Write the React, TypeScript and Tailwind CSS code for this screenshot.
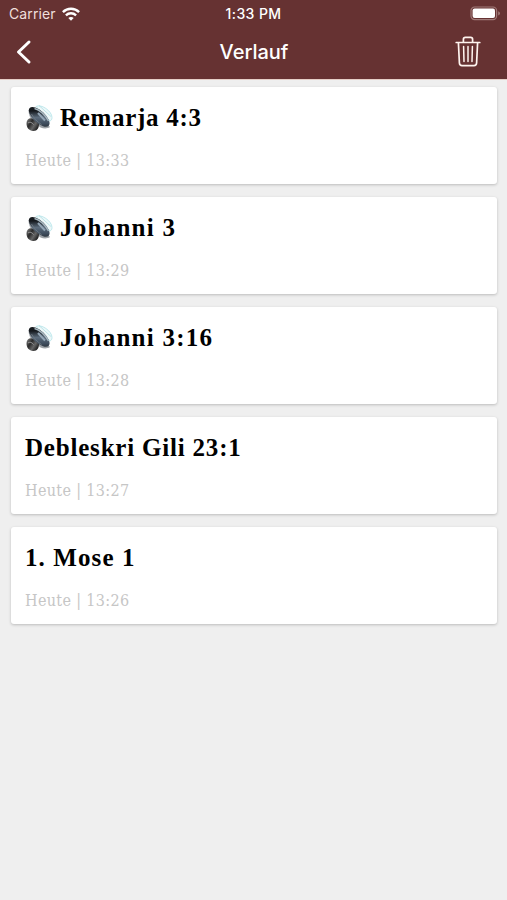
interface HistoryEntry {
  title: string;
  time: string;
  audio?: boolean;
  tracking: string;
}

const entries: HistoryEntry[] = [
  { title: "Remarja 4:3", time: "13:33", audio: true, tracking: "tracking-[0.7px]" },
  { title: "Johanni 3", time: "13:29", audio: true, tracking: "tracking-[1.25px]" },
  { title: "Johanni 3:16", time: "13:28", audio: true, tracking: "tracking-[1.25px]" },
  { title: "Debleskri Gili 23:1", time: "13:27", tracking: "tracking-[0.8px]" },
  { title: "1. Mose 1", time: "13:26", tracking: "tracking-[1.1px]" },
];

function WifiIcon() {
  return (
    <svg width="18" height="14" viewBox="0 0 18 14" fill="none" stroke="#fff" strokeWidth="2.4">
      <path d="M.9 5.1C5.4.7 12.6.7 17.1 5.1" />
      <path d="M3.9 8.3c2.9-2.7 7.3-2.7 10.2 0" />
      <path d="M9 13.8 6.3 11c1.5-1.4 3.9-1.4 5.4 0Z" fill="#fff" stroke="none" />
    </svg>
  );
}

function BatteryIcon() {
  return (
    <svg width="31" height="15" viewBox="0 0 31 15" fill="none">
      <rect x="1" y="1" width="25.6" height="12.6" rx="3.6" stroke="#a07a78" strokeWidth="1.2" />
      <rect x="2.6" y="2.6" width="22.4" height="9.4" rx="2" fill="#fff" />
      <path d="M28.2 5.2c2.4.9 2.4 3.3 0 4.2Z" fill="#a07a78" />
    </svg>
  );
}

function TrashIcon() {
  return (
    <svg
      width="26"
      height="32"
      viewBox="0 0 26 32"
      fill="none"
      stroke="#fff4ef"
      strokeWidth="1.7"
      strokeLinecap="round"
      strokeLinejoin="round"
    >
      <path d="M1.2 6.5h23.6" />
      <path d="M8.4 6.2V3.4c0-1.2.8-2 2-2h5.2c1.2 0 2 .8 2 2v2.8" />
      <path d="M3.4 6.8 4.4 27c.1 1.7 1 2.6 2.6 2.6h12c1.6 0 2.5-.9 2.6-2.6l1-20.2" />
      <path d="m8.6 10.6.4 15M13 10.6v15M17.4 10.6l-.4 15" strokeWidth="1.5" />
    </svg>
  );
}

function SpeakerIcon() {
  return (
    <svg width="28" height="28" viewBox="0 0 28 28" fill="none" className="shrink-0">
      <defs>
        <linearGradient id="cone" x1="4" y1="3" x2="23" y2="22" gradientUnits="userSpaceOnUse">
          <stop stopColor="#1b2023" />
          <stop offset=".3" stopColor="#15191d" />
          <stop offset=".55" stopColor="#5d6d7d" />
          <stop offset=".78" stopColor="#3f4e5e" />
          <stop offset="1" stopColor="#20262b" />
        </linearGradient>
        <linearGradient id="magnet" x1="1" y1="17" x2="13" y2="25" gradientUnits="userSpaceOnUse">
          <stop stopColor="#777" />
          <stop offset=".35" stopColor="#2b2b2b" />
          <stop offset=".65" stopColor="#666" />
          <stop offset="1" stopColor="#151515" />
        </linearGradient>
      </defs>
      {/* glass rim */}
      <path d="M11 2.5C16-.5 27 7 27 13.5c0 2-1 3-2 3.5Z" fill="#eef8f9" stroke="#b2e3e8" strokeWidth=".8" />
      <path d="m14 1.5 12 11" stroke="#a8dde3" strokeWidth=".7" />
      {/* basket */}
      <path d="M3.5 6c0 4 1.5 8 4 11l8 6.5c3 1.2 7 1.5 9.5-.5L8 4Z" fill="#9da2a6" />
      <path d="M1.5 19c.3-4 3.5-6 7-4l5.5 4c.3 4.8-1.7 8-5.5 8-4 .3-7.3-3.5-7-8Z" fill="url(#magnet)" />
      <path d="M3 19c2-1.5 4-.5 5.5 1.5" stroke="#a3a3a3" strokeWidth="1" />
      {/* cone */}
      <ellipse cx="14.2" cy="12.8" rx="13" ry="6" transform="rotate(43 14.2 12.8)" fill="url(#cone)" />
      <path d="M9.5 4.5c5 1 11 6.5 14 12.5" stroke="#a8b7c0" strokeWidth="1.5" />
      <path d="m13 9 7 7.5" stroke="#93a5b5" strokeWidth="2" />
      <path d="M6.5 10c2 4 6 8 10 10.5" stroke="#6e7880" strokeWidth=".9" />
    </svg>
  );
}

function HistoryCard({ entry }: { entry: HistoryEntry }) {
  return (
    <li className="h-[97px] rounded-[3px] bg-white px-3.5 pt-[15px] shadow-[0_1px_3px_rgba(0,0,0,0.22)]">
      <div className="flex h-8 items-center">
        {entry.audio && (
          <div className="w-[35px] shrink-0">
            <SpeakerIcon />
          </div>
        )}
        <h2 className={`whitespace-nowrap text-[25px] leading-8 font-bold text-black ${entry.tracking}`}>
          {entry.title}
        </h2>
      </div>
      <p className="mt-[15px] font-['DejaVu_Serif_Condensed','DejaVu_Serif',serif] text-[16px] leading-6 tracking-[0.33px] whitespace-nowrap text-[#c6c6c6]">
        Heute | {entry.time}
      </p>
    </li>
  );
}

export default function App() {
  return (
    <div className="min-h-[900px] w-full bg-[#efefef]">
      <header className="h-20 border-b border-[#e6cfc7] bg-[#663232] font-['Inter','Liberation_Sans',sans-serif] text-white">
        <div className="grid h-[27px] grid-cols-[1fr_auto_1fr] items-center px-2">
          <div className="flex items-center gap-1.5 pl-px">
            <span className="text-[14px] tracking-[0.1px] text-[#f0dfdc]">Carrier</span>
            <WifiIcon />
          </div>
          <span className="text-[14px] font-medium tracking-[0.4px]">1:33 PM</span>
          <div className="-mr-0.5 flex justify-end">
            <BatteryIcon />
          </div>
        </div>
        <div className="grid h-[50px] grid-cols-[1fr_auto_1fr] items-center pr-[26px] pl-[27px]">
          <button aria-label="Zurück" className="-ml-[11px]">
            <svg width="16" height="26" viewBox="0 0 16 26" fill="none" stroke="#fff" strokeWidth="3" strokeLinecap="round" strokeLinejoin="round">
              <path d="M13 3 2.5 13 13 23" />
            </svg>
          </button>
          <h1 className="text-[20px] font-medium">Verlauf</h1>
          <button aria-label="Verlauf löschen" className="justify-self-end">
            <TrashIcon />
          </button>
        </div>
      </header>
      <ul className="flex flex-col gap-[13px] pt-[7px] pr-[10px] pl-[11px] font-['Liberation_Serif',serif]">
        {entries.map((entry) => (
          <HistoryCard key={entry.time} entry={entry} />
        ))}
      </ul>
    </div>
  );
}
